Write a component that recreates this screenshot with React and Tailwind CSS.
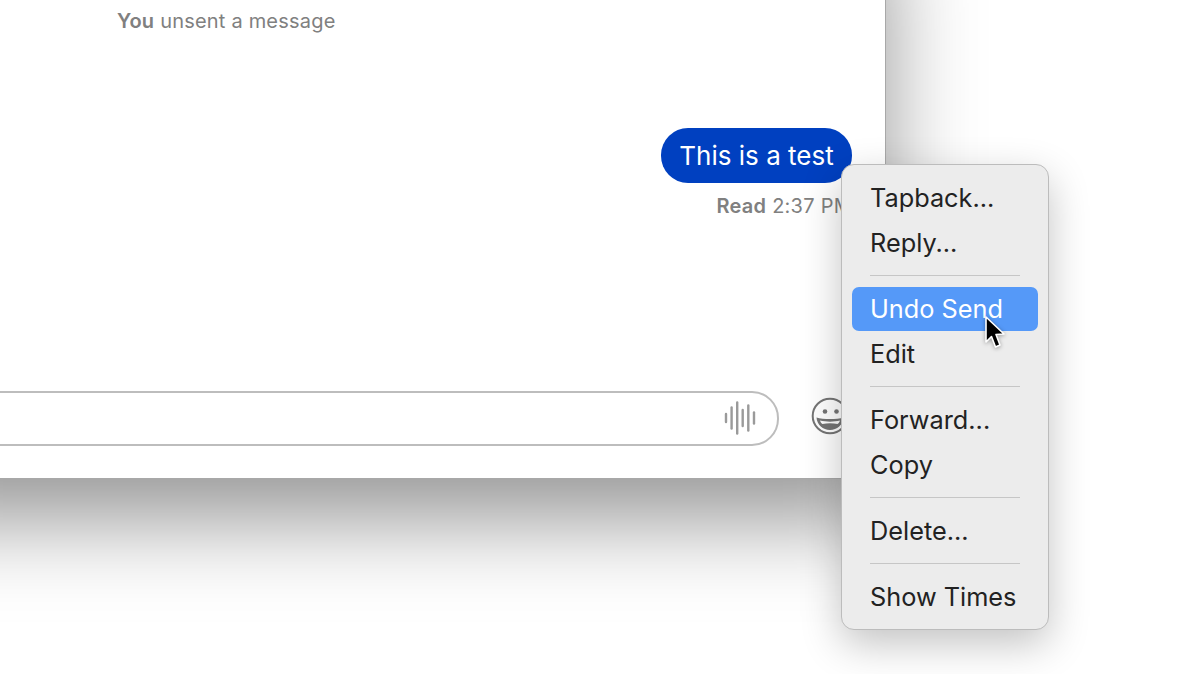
import React from 'react'

const menuGroups = [
  ['Tapback...', 'Reply...'],
  ['Undo Send', 'Edit'],
  ['Forward...', 'Copy'],
  ['Delete...'],
  ['Show Times'],
]

const WaveIcon = () => (
  <svg width="34" height="36" viewBox="0 0 34 36" className="block -mt-[2px]">
    <g stroke="#9a9a9a" strokeWidth="2.4" strokeLinecap="round">
      <line x1="3" y1="14" x2="3" y2="22" />
      <line x1="8.6" y1="7.5" x2="8.6" y2="28.5" />
      <line x1="14.2" y1="2.5" x2="14.2" y2="33.5" />
      <line x1="19.7" y1="10" x2="19.7" y2="26" />
      <line x1="25.3" y1="5.5" x2="25.3" y2="30.5" />
      <line x1="31" y1="12.5" x2="31" y2="23.5" />
    </g>
  </svg>
)

const EmojiIcon = () => (
  <svg width="38" height="38" viewBox="0 0 38 38" className="block">
    <circle cx="19" cy="19" r="17.3" fill="none" stroke="#757575" strokeWidth="2" />
    <circle cx="14" cy="14.5" r="2.3" fill="#757575" />
    <circle cx="25.5" cy="14.5" r="2.3" fill="#757575" />
    <path d="M5.5 20.5 C12 22.5 26 22.5 32.5 20.5 C32 28 26 33 19 33 C12 33 6 28 5.5 20.5 Z" fill="#757575" />
    <path d="M9 23.5 C15 25 23 25 29 23.5 C28.5 25.5 27.5 26.5 26.5 27 C22 26 16 26 11.5 27 C10.5 26.5 9.5 25.5 9 23.5 Z" fill="#fff" />
  </svg>
)

const Cursor = () => (
  <svg width="24" height="36" viewBox="0 0 24 36" className="block drop-shadow-[0_1px_2px_rgba(0,0,0,0.35)]">
    <path
      d="M2 2 L2 27 L7.5 21.5 L11.5 32 L16 30 L12 19.5 L20 19 Z"
      fill="#000"
      stroke="#fff"
      strokeWidth="1.6"
      strokeLinejoin="round"
    />
  </svg>
)

const App = () => {
  return (
    <div className="relative w-[1200px] h-[674px] overflow-hidden bg-white font-['Inter',sans-serif]">
      {/* Messages window, runs off the top and left */}
      <div className="flex flex-col w-[986px] h-[579px] -mt-[100px] -ml-[100px] bg-white border-r border-b border-[#a8a8a8] shadow-[0_40px_85px_rgba(0,0,0,0.42)]">
        <div className="pt-[109px] pl-[217px] text-[20px] leading-[24px] tracking-[0.2px] text-[#808080]">
          <span className="font-semibold">You</span> unsent a message
        </div>

        <div className="flex flex-col items-end pt-[95px] pr-[33px]">
          <div className="h-[55px] w-[191px] flex items-center justify-center rounded-[27px] bg-[#0040c0] text-white text-[26px]">
            This is a test
          </div>
          <div className="mt-[11px] text-[20px] leading-[24px] tracking-[0.25px] text-[#808080] whitespace-nowrap">
            <span className="font-semibold">Read</span> 2:37 PM
          </div>
        </div>

        <div className="flex items-center mt-[173px] pr-[36px]">
          <div className="flex-1 h-[55px] -ml-[10px] flex items-center justify-end pr-[20px] rounded-r-[27px] border-2 border-[#bdbdbd]">
            <WaveIcon />
          </div>
          <div className="ml-[32px] -mt-[6px]">
            <EmojiIcon />
          </div>
        </div>
      </div>

      {/* Context menu */}
      <div className="absolute left-[841px] top-[164px] w-[208px] h-[466px] pt-[11px] rounded-[13px] bg-[#ececec] border border-[#bcbcbc] shadow-[0_14px_40px_rgba(0,0,0,0.24)]">
        {menuGroups.map((group, i) => (
          <div key={group[0]}>
            {i > 0 && (
              <div className="flex items-center h-[21px] pb-[2px] px-[28px]">
                <div className="h-[1px] w-full bg-[#c6c6c6]" />
              </div>
            )}
            {group.map((item) => (
              <div
                key={item}
                className={
                  item === 'Undo Send'
                    ? 'h-[44px] mb-[1px] mx-[10px] pl-[18px] flex items-center rounded-[7px] bg-[#5599f8] text-white text-[25.3px]'
                    : 'h-[44px] mb-[1px] mx-[10px] pl-[18px] flex items-center text-[#222222] text-[25.3px]'
                }
              >
                {item}
              </div>
            ))}
          </div>
        ))}
      </div>

      {/* Pointer */}
      <div className="absolute left-[984px] top-[315px]">
        <Cursor />
      </div>
    </div>
  )
}

export default App
